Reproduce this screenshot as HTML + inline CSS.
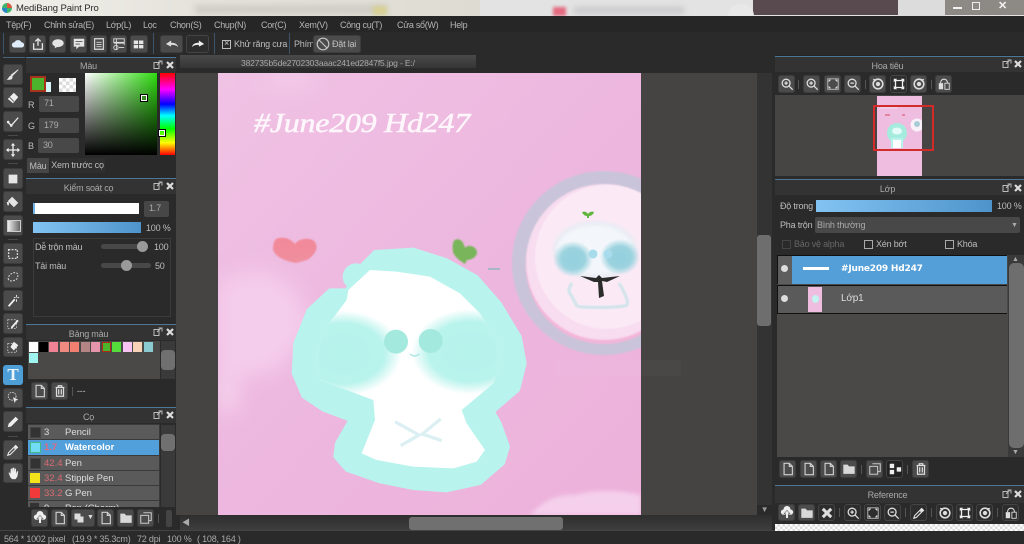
<!DOCTYPE html>
<html><head><meta charset="utf-8"><title>MediBang Paint Pro</title>
<style>
html,body{margin:0;padding:0;background:#222}
#r{position:relative;width:1024px;height:544px;overflow:hidden;background:#242424;font:9px "Liberation Sans","Noto Sans CJK JP",sans-serif;letter-spacing:-.2px;color:#bdbdbd;filter:blur(.3px)}
#r div,#r span.a,#r svg.a{position:absolute}
.t{white-space:nowrap;line-height:12px}
.b{background:#4b4b4b;border-radius:3px;box-shadow:inset 0 0 0 1px #3c3c3c}
.d{background:#2d2d2d;border-radius:3px;box-shadow:inset 0 0 0 1px #444}
.b svg,.d svg{position:absolute;left:50%;top:50%;transform:translate(-50%,-50%);width:14px;height:14px}
.ph{background:#333;height:15px;border-top:1px solid #4d7796;box-sizing:content-box}
.c{text-align:center;color:#aaa}
.m{font-size:9px;letter-spacing:-.3px;color:#b5b5b5;top:19px}
.in{background:#484848;border-radius:2px;color:#aaa;text-indent:5px;line-height:15px}
.row{left:28px;width:131px;height:14px;background:#5a5a5a;color:#ddd;font-size:9.5px;letter-spacing:0;line-height:14px}
.sw{width:9px;height:10px}
.sep{background:#555;width:1px}
</style></head><body><div id="r">
<svg width="0" height="0" style="position:absolute"><defs>
<symbol id="page" viewBox="0 0 16 16"><path d="M3.5 1.5h6l3.5 3.5v9.500h-9.500zM9.500 1.500v3.500h3.500" fill="none" stroke="#d0d0d0" stroke-width="1.300"/></symbol>
<symbol id="trash" viewBox="0 0 16 16"><path d="M3 4h10M6 4V2h4v2M4 4v10h8V4M6.500 6v6M9.500 6v6" fill="none" stroke="#ddd" stroke-width="1.400"/></symbol>
<symbol id="fold" viewBox="0 0 16 16"><path d="M1.500 3h5l1.500 2h6.500v8.500h-13z" fill="#d8d8d8"/></symbol>
<symbol id="dup" viewBox="0 0 16 16"><path d="M5 2h9v9h-3M2 5h9v9H2z" fill="none" stroke="#c8c8c8" stroke-width="1.200"/></symbol>
<symbol id="cloudup" viewBox="0 0 16 16"><path d="M4 10a3 3 0 0 1 0-6 4 4 0 0 1 8 0 3 3 0 0 1 0 6z" fill="#eee"/><path d="M8 5l3.500 4H9.500v5h-3V9H4.500z" fill="#eee" stroke="#4b4b4b" stroke-width=".6"/></symbol>
<symbol id="zin" viewBox="0 0 16 16"><circle cx="7" cy="7" r="4.500" fill="none" stroke="#ddd" stroke-width="1.500"/><path d="M10.500 10.500l4 4M5 7h4M7 5v4" stroke="#ddd" stroke-width="1.500"/></symbol>
<symbol id="zout" viewBox="0 0 16 16"><circle cx="7" cy="7" r="4.500" fill="none" stroke="#ddd" stroke-width="1.500"/><path d="M10.500 10.500l4 4M5 7h4" stroke="#ddd" stroke-width="1.500"/></symbol>
<symbol id="fit" viewBox="0 0 16 16"><path d="M2 2h12v12H2z" fill="none" stroke="#bbb"/><path d="M3 3h3L3 6zM13 3v3l-3-3zM3 13v-3l3 3zM13 13h-3l3-3z" fill="#ddd"/></symbol>
<symbol id="rot" viewBox="0 0 16 16"><circle cx="8" cy="8" r="5.500" fill="none" stroke="#ddd" stroke-width="1.800"/><circle cx="8" cy="8" r="2.500" fill="#ddd"/><path d="M2 2l5 1-3 3z" fill="#ddd"/></symbol>
<symbol id="rot2" viewBox="0 0 16 16"><circle cx="8" cy="8" r="5.500" fill="none" stroke="#ddd" stroke-width="1.800"/><circle cx="8" cy="8" r="2.500" fill="#ddd"/><path d="M14 2l-5 1 3 3z" fill="#ddd"/></symbol>
<symbol id="frame" viewBox="0 0 16 16"><path d="M4 4h8v8H4z" fill="none" stroke="#eee" stroke-width="1.500"/><path d="M2 2h4L2 6zM14 2v4l-4-4zM2 14v-4l4 4zM14 14h-4l4-4z" fill="#eee"/></symbol>
<symbol id="flip" viewBox="0 0 16 16"><path d="M2 7h5v7H2z" fill="#ddd"/><path d="M9 7h5v7H9z" fill="none" stroke="#ddd"/><path d="M4 7c0-6 8-6 8 0" fill="none" stroke="#ddd" stroke-width="1.200"/></symbol>
<symbol id="pop" viewBox="0 0 10 10"><path d="M1 2.500h5v6H1z" fill="none" stroke="#bbb"/><path d="M4 5l4-4M5.500 1H9v3.500" fill="none" stroke="#bbb"/></symbol>
<symbol id="x" viewBox="0 0 10 10"><path d="M2 2l6 6M8 2l-6 6" stroke="#ddd" stroke-width="2.200"/></symbol>
</defs></svg>

<!-- title bar -->
<div style="left:0;top:0;width:1024px;height:16px;background:#e3e3e3"></div>
<div style="left:0;top:0;width:480px;height:16px;background:linear-gradient(90deg,#f0efe9,#e5e3dc 40%,#dedcd2)"></div>
<div style="left:195px;top:5px;width:190px;height:9px;background:#cfcdc5;filter:blur(3px)"></div>
<div style="left:373px;top:6px;width:14px;height:9px;background:#d8d092;filter:blur(2px)"></div>
<div style="left:574px;top:7px;width:110px;height:7px;background:#c9c9cc;filter:blur(3px)"></div>
<div style="left:553px;top:7px;width:13px;height:9px;background:#e36a80;filter:blur(1.500px)"></div>
<div style="left:753px;top:0;width:146px;height:15px;background:#594a50"></div>
<div style="left:728px;top:4px;width:26px;height:12px;background:#e8e8e8;border-radius:12px 12px 0 0"></div>
<div style="left:898px;top:0;width:48px;height:16px;background:#dcdcdc"></div>
<div style="left:945px;top:0;width:79px;height:15px;background:#8d8985"></div>
<div style="left:953px;top:7px;width:9px;height:2px;background:#f2f2f2"></div>
<div style="left:972px;top:2px;width:6px;height:6px;border:1.500px solid #eee"></div>
<div class="t" style="left:998px;top:0;color:#f4f4f4;font-size:11px;font-weight:bold">✕</div>
<svg class="a" style="left:1px;top:2px" width="12" height="12"><circle cx="6" cy="6" r="5" fill="#3fb56a"/><path d="M6 1a5 5 0 0 1 5 5H6z" fill="#e2543e"/><path d="M1 6a5 5 0 0 0 5 5V6z" fill="#2a84c8"/></svg>
<div class="t" style="left:16px;top:3px;color:#2a2a2a;font-size:9.5px;letter-spacing:-.1px">MediBang Paint Pro</div>

<!-- menu -->
<div style="left:0;top:16px;width:1024px;height:16px;background:#262626"></div>
<div class="t m" style="left:6px">Tệp(F)</div>
<div class="t m" style="left:44px">Chỉnh sửa(E)</div>
<div class="t m" style="left:106px">Lớp(L)</div>
<div class="t m" style="left:143px">Lọc</div>
<div class="t m" style="left:170px">Chọn(S)</div>
<div class="t m" style="left:214px">Chụp(N)</div>
<div class="t m" style="left:261px">Cor(C)</div>
<div class="t m" style="left:299px">Xem(V)</div>
<div class="t m" style="left:340px">Công cụ(T)</div>
<div class="t m" style="left:397px">Cửa sổ(W)</div>
<div class="t m" style="left:450px">Help</div>

<!-- toolbar -->
<div style="left:0;top:32px;width:1024px;height:23px;background:#2a2a2a"></div>
<div style="left:3px;top:33px;width:1px;height:21px;background:#3d556a"></div>
<div style="left:153px;top:33px;width:1px;height:21px;background:#3d556a"></div>
<div style="left:214px;top:33px;width:1px;height:21px;background:#3d556a"></div>
<div style="left:289px;top:33px;width:1px;height:21px;background:#3d556a"></div>
<div class="b" style="left:9px;top:35px;width:17px;height:18px"><svg viewBox="0 0 16 16"><path d="M4 12a3 3 0 0 1 0-6 4.500 4.500 0 0 1 8 0 3 3 0 0 1 0 6z" fill="#dfeefa"/></svg></div>
<div class="b" style="left:29px;top:35px;width:17px;height:18px"><svg viewBox="0 0 16 16"><path d="M3 7v7h10V7M8 10V2M5 5l3-3 3 3" fill="none" stroke="#e5e5e5" stroke-width="1.500"/></svg></div>
<div class="b" style="left:49px;top:35px;width:17px;height:18px"><svg viewBox="0 0 16 16"><ellipse cx="8" cy="7" rx="6.500" ry="4.500" fill="#e5e5e5"/><path d="M5 10l-1 3 4-2z" fill="#e5e5e5"/></svg></div>
<div class="b" style="left:70px;top:35px;width:17px;height:18px"><svg viewBox="0 0 16 16"><path d="M2 2h12v9H8l-3 3v-3H2z" fill="#e5e5e5"/><path d="M4 5h8M4 8h5" stroke="#555"/></svg></div>
<div class="b" style="left:90px;top:35px;width:17px;height:18px"><svg viewBox="0 0 16 16"><path d="M3 2h10v12H3z" fill="none" stroke="#ddd" stroke-width="1.300"/><path d="M5 6h6M5 8.500h6M5 11h6" stroke="#ddd"/></svg></div>
<div class="b" style="left:110px;top:35px;width:17px;height:18px"><svg viewBox="0 0 16 16"><path d="M2 2h12v4H2zM2 7h12v2M5 2v12" fill="none" stroke="#ddd"/><circle cx="4.500" cy="12" r="2.500" fill="none" stroke="#ddd"/><path d="M8 12h6" stroke="#ddd"/></svg></div>
<div class="b" style="left:130px;top:35px;width:18px;height:18px"><svg viewBox="0 0 16 16"><path d="M2 4h5v4H2zM8 4h5v4H8zM2 9h5v4H2zM8 9h5v4H8z" fill="#e5e5e5"/></svg></div>
<div class="b" style="left:160px;top:35px;width:23px;height:18px"><svg viewBox="0 0 16 16"><path d="M1 8l6-4v2.500c4 0 7 1 8 5-2-2-4-2.500-8-2.500V11z" fill="#ddd"/></svg></div>
<div class="d" style="left:186px;top:35px;width:23px;height:18px"><svg viewBox="0 0 16 16"><path d="M15 8L9 4v2.500c-4 0-7 1-8 5 2-2 4-2.500 8-2.500V11z" fill="#eee"/></svg></div>
<div style="left:222px;top:40px;width:7px;height:7px;border:1px solid #bbb"></div>
<div class="t" style="left:224px;top:39px;font-size:9px;color:#ccc;line-height:9px">×</div>
<div class="t" style="left:234px;top:38px;color:#bbb">Khử răng cưa</div>
<div class="t" style="left:294px;top:38px;color:#bbb">Phím</div>
<div class="b" style="left:313px;top:35px;width:48px;height:18px"></div>
<svg class="a" style="left:316px;top:37px" width="14" height="14"><circle cx="7" cy="7" r="5.800" fill="none" stroke="#c5c5c5" stroke-width="1.200"/><path d="M3 3l8 8" stroke="#c5c5c5" stroke-width="1.200"/></svg>
<div class="t" style="left:332px;top:38px;color:#c0c0c0">Đặt lại</div>

<!-- left tools -->
<div style="left:0;top:55px;width:26px;height:475px;background:#2a2a2a"></div>
<div style="left:3px;top:57px;width:22px;height:1px;background:#48647c"></div>
<div class="b" style="left:3px;top:64px;width:20px;height:21px"><svg viewBox="0 0 16 16"><path d="M14 2L7 9l-1-1zM6 9c-2 0-2 2-4 4 3 0 5 0 5-3z" fill="#e5e5e5" stroke="#e5e5e5"/></svg></div>
<div class="b" style="left:3px;top:87px;width:20px;height:21px"><svg viewBox="0 0 16 16"><path d="M9 2l5 5-6 7-6-5z" fill="#eee"/><path d="M4 7l5 5" stroke="#444"/></svg></div>
<div class="b" style="left:3px;top:111px;width:20px;height:21px"><svg viewBox="0 0 16 16"><path d="M2 8l4 4 8-9" fill="none" stroke="#eee" stroke-width="1.500"/><circle cx="2.500" cy="8" r="1.500" fill="#eee"/><circle cx="6" cy="12" r="1.500" fill="#eee"/></svg></div>
<div style="left:8px;top:135px;width:10px;height:1px;background:#4a4a4a"></div>
<div class="b" style="left:3px;top:139px;width:20px;height:21px"><svg viewBox="0 0 16 16"><path d="M8 1v14M1 8h14" stroke="#eee" stroke-width="1.500"/><path d="M8 0l2.500 3h-5zM8 16l2.500-3h-5zM0 8l3-2.500v5zM16 8l-3-2.500v5z" fill="#eee"/></svg></div>
<div style="left:8px;top:163px;width:10px;height:1px;background:#4a4a4a"></div>
<div class="b" style="left:3px;top:168px;width:20px;height:21px"><svg viewBox="0 0 16 16"><path d="M3 3h10v10H3z" fill="#e5e5e5"/></svg></div>
<div class="b" style="left:3px;top:191px;width:20px;height:21px"><svg viewBox="0 0 16 16"><path d="M7 2l7 7-5 5-7-7z" fill="#e5e5e5"/><path d="M1 8c0 3 1 4 1.500 4S4 11 3 8z" fill="#e5e5e5"/></svg></div>
<div class="b" style="left:3px;top:215px;width:20px;height:21px"><div style="left:4px;top:5px;width:12px;height:10px;background:linear-gradient(90deg,#eee,#666);border:1px solid #ccc"></div></div>
<div style="left:8px;top:239px;width:10px;height:1px;background:#4a4a4a"></div>
<div class="b" style="left:3px;top:243px;width:20px;height:21px"><svg viewBox="0 0 16 16"><path d="M3 3h10v10H3z" fill="none" stroke="#ddd" stroke-width="1.500" stroke-dasharray="2 1.500"/></svg></div>
<div class="b" style="left:3px;top:266px;width:20px;height:22px"><svg viewBox="0 0 16 16"><path d="M3 11c-2-3 3-8 7-8s4 3 3 6-8 5-10 2z" fill="none" stroke="#ccc" stroke-width="1.300" stroke-dasharray="2 1.500"/></svg></div>
<div class="b" style="left:3px;top:290px;width:20px;height:21px"><svg viewBox="0 0 16 16"><path d="M3 14L10 6" stroke="#eee" stroke-width="2"/><path d="M12 1v3M12 6v3M9 4h2M13 4h2" stroke="#eee"/></svg></div>
<div class="b" style="left:3px;top:313px;width:20px;height:21px"><svg viewBox="0 0 16 16"><path d="M2 3h10v10H2z" fill="none" stroke="#bbb" stroke-dasharray="2 1.500"/><path d="M6 11l7-8 1.500 1.500-7 8-2 .5z" fill="#eee"/></svg></div>
<div class="b" style="left:3px;top:337px;width:20px;height:20px"><svg viewBox="0 0 16 16"><path d="M2 4h10v10H2z" fill="none" stroke="#bbb" stroke-dasharray="2 1.500"/><path d="M9 2l5 4-5 6-4-4z" fill="#eee"/></svg></div>
<div style="left:3px;top:365px;width:20px;height:20px;background:#4e9fd8;border-radius:3px;color:#eef6fb;font:bold 17px/20px 'Liberation Serif',serif;text-align:center">T</div>
<div class="b" style="left:3px;top:388px;width:20px;height:20px"><svg viewBox="0 0 16 16"><circle cx="7" cy="6" r="4.500" fill="none" stroke="#ccc" stroke-dasharray="2 1"/><path d="M8 7l6 3-3 1-1 3z" fill="#eee"/></svg></div>
<div class="b" style="left:3px;top:411px;width:20px;height:21px"><svg viewBox="0 0 16 16"><path d="M3 10l8-8 3 3-8 8-4 1z" fill="#eee"/></svg></div>
<div style="left:8px;top:436px;width:10px;height:1px;background:#4a4a4a"></div>
<div class="b" style="left:3px;top:440px;width:20px;height:20px"><svg viewBox="0 0 16 16"><path d="M2 14l1-3 6-6 2 2-6 6z" fill="none" stroke="#eee" stroke-width="1.200"/><path d="M9 4l2-2 3 3-2 2z" fill="#eee"/></svg></div>
<div class="b" style="left:3px;top:463px;width:20px;height:20px"><svg viewBox="0 0 16 16"><path d="M3 8l2 5 2 2h4l2-3 1-6-1.500 0-1 3V3h-1.500l-.5 4V2H7.500L7 7V3H5.500L5 9 3.500 7z" fill="#eee"/></svg></div>

<!-- panel: Màu -->
<div class="ph" style="left:26px;top:57px;width:150px"></div>
<div class="t c" style="left:26px;top:60px;width:125px">Màu</div>
<svg class="a" style="left:153px;top:60px" width="10" height="10"><use href="#pop"/></svg>
<svg class="a" style="left:165px;top:60px" width="10" height="10"><use href="#x"/></svg>
<div style="left:26px;top:73px;width:150px;height:105px;background:#2a2a2a"></div>
<div style="left:37px;top:82px;width:14px;height:10px;background:#d4f6f8"></div>
<div style="left:30px;top:76px;width:12px;height:12px;background:#4cb32c;border:2px solid #a8321a"></div>
<div style="left:59px;top:78px;width:17px;height:14px;background:repeating-conic-gradient(#ddd 0 25%,#fff 0 50%) 0 0/7px 7px"></div>
<div class="t" style="left:28px;top:99px">R</div><div class="in t" style="left:39px;top:96px;width:40px;height:16px">71</div>
<div class="t" style="left:28px;top:120px">G</div><div class="in t" style="left:39px;top:118px;width:40px;height:15px">179</div>
<div class="t" style="left:28px;top:140px">B</div><div class="in t" style="left:38px;top:138px;width:41px;height:15px">30</div>
<div style="left:85px;top:73px;width:72px;height:82px;background:linear-gradient(0deg,#000,transparent),linear-gradient(90deg,#fff,#2fdc10)"></div>
<div style="left:141px;top:95px;width:4px;height:4px;border:1px solid #fff;outline:1px solid #000;background:#3a8a24"></div>
<div style="left:160px;top:73px;width:15px;height:82px;background:linear-gradient(180deg,#f00,#f0f 20%,#00f 38%,#0ff 52%,#0f0 68%,#ff0 85%,#f00)"></div>
<div style="left:159px;top:130px;width:4px;height:4px;border:1px solid #fff;outline:1px solid #000"></div>
<div class="t" style="left:27px;top:158px;width:22px;height:15px;background:#464646;text-align:center;line-height:16px">Màu</div>
<div class="t" style="left:50px;top:158px;width:55px;height:15px;background:#2f2f2f;text-align:center;line-height:15px">Xem trước cọ</div>

<!-- panel: Kiểm soát cọ -->
<div class="ph" style="left:26px;top:178px;width:150px"></div>
<div class="t c" style="left:26px;top:182px;width:125px">Kiểm soát cọ</div>
<svg class="a" style="left:153px;top:181px" width="10" height="10"><use href="#pop"/></svg>
<svg class="a" style="left:165px;top:181px" width="10" height="10"><use href="#x"/></svg>
<div style="left:26px;top:194px;width:150px;height:130px;background:#2a2a2a"></div>
<div style="left:33px;top:203px;width:106px;height:11px;background:#fff;box-shadow:inset 2px 0 #6fb3e6"></div>
<div class="in t" style="left:144px;top:201px;width:25px;height:16px;background:#474747">1.7</div>
<div style="left:33px;top:222px;width:108px;height:11px;background:linear-gradient(90deg,#82c3f2,#4e94cb)"></div>
<div class="t" style="left:146px;top:222px">100 %</div>
<div style="left:33px;top:238px;width:136px;height:77px;border:1px solid #3b3b3b"></div>
<div class="t" style="left:35px;top:241px">Dễ trộn màu</div>
<div style="left:101px;top:244px;width:47px;height:5px;background:#484848;border-radius:3px"></div>
<div style="left:137px;top:241px;width:11px;height:11px;border-radius:50%;background:#9a9a9a"></div>
<div class="t" style="left:154px;top:241px">100</div>
<div class="t" style="left:35px;top:260px">Tải màu</div>
<div style="left:101px;top:263px;width:50px;height:5px;background:#484848;border-radius:3px"></div>
<div style="left:121px;top:260px;width:11px;height:11px;border-radius:50%;background:#9a9a9a"></div>
<div class="t" style="left:155px;top:260px">50</div>

<!-- panel: Bảng màu -->
<div class="ph" style="left:26px;top:324px;width:150px"></div>
<div class="t c" style="left:26px;top:328px;width:125px">Bảng màu</div>
<svg class="a" style="left:153px;top:327px" width="10" height="10"><use href="#pop"/></svg>
<svg class="a" style="left:165px;top:327px" width="10" height="10"><use href="#x"/></svg>
<div style="left:26px;top:340px;width:150px;height:67px;background:#2a2a2a"></div>
<div style="left:28px;top:341px;width:132px;height:38px;background:#4b4848"></div>
<div class="sw" style="left:29px;top:342px;background:#fff"></div>
<div class="sw" style="left:39px;top:342px;background:#000"></div>
<div class="sw" style="left:49px;top:342px;background:#f08296"></div>
<div class="sw" style="left:60px;top:342px;background:#ef8a80"></div>
<div class="sw" style="left:70px;top:342px;background:#f17f72"></div>
<div class="sw" style="left:81px;top:342px;background:#b58585"></div>
<div class="sw" style="left:91px;top:342px;background:#e596ad"></div>
<div class="sw" style="left:102px;top:342px;width:7px;height:8px;background:#4cb32c;border:1px solid #b0281a"></div>
<div class="sw" style="left:112px;top:342px;background:#55dd3c"></div>
<div class="sw" style="left:123px;top:342px;background:#f7c3f2"></div>
<div class="sw" style="left:133px;top:342px;background:#f8d2b6"></div>
<div class="sw" style="left:144px;top:342px;background:#8ccad2"></div>
<div class="sw" style="left:29px;top:353px;background:#9ff4f0"></div>
<div style="left:161px;top:341px;width:14px;height:38px;background:#3a3a3a"></div>
<div style="left:161px;top:350px;width:14px;height:20px;background:#707070;border-radius:4px"></div>
<div class="b" style="left:31px;top:382px;width:17px;height:18px"><svg><use href="#page"/></svg></div>
<div class="b" style="left:51px;top:382px;width:17px;height:18px"><svg><use href="#trash"/></svg></div>
<div class="sep" style="left:72px;top:387px;height:9px"></div>
<div class="t" style="left:77px;top:385px">---</div>

<!-- panel: Cọ -->
<div class="ph" style="left:26px;top:407px;width:150px"></div>
<div class="t c" style="left:26px;top:411px;width:125px">Cọ</div>
<svg class="a" style="left:153px;top:410px" width="10" height="10"><use href="#pop"/></svg>
<svg class="a" style="left:165px;top:410px" width="10" height="10"><use href="#x"/></svg>
<div style="left:26px;top:423px;width:150px;height:107px;background:#2a2a2a"></div>
<div style="left:28px;top:424px;width:132px;height:83px;background:#3a3a3a;overflow:hidden"></div>
<div class="row" style="top:425px"><div class="t" style="left:16px;top:2px">3</div><div class="t" style="left:37px;top:2px">Pencil</div><div style="left:2px;top:2px;width:9px;height:9px;background:#333;border:1px solid #444"></div></div>
<div class="row" style="top:440px;height:15px;background:#52a0db;color:#fff;font-weight:bold"><div class="t" style="left:16px;top:2px;color:#e06a80">1.7</div><div class="t" style="left:37px;top:2px">Watercolor</div><div style="left:2px;top:2px;width:9px;height:9px;background:#71dcf3;border:1px solid #4b8"></div></div>
<div class="row" style="top:456px"><div class="t" style="left:16px;top:2px;color:#d86a72">42.4</div><div class="t" style="left:37px;top:2px">Pen</div><div style="left:2px;top:2px;width:9px;height:9px;background:#333;border:1px solid #444"></div></div>
<div class="row" style="top:471px"><div class="t" style="left:16px;top:2px;color:#d86a72">32.4</div><div class="t" style="left:37px;top:2px">Stipple Pen</div><div style="left:2px;top:2px;width:10px;height:10px;background:#f4e21a"></div></div>
<div class="row" style="top:486px"><div class="t" style="left:16px;top:2px;color:#d86a72">33.2</div><div class="t" style="left:37px;top:2px">G Pen</div><div style="left:2px;top:2px;width:10px;height:10px;background:#f23a3a"></div></div>
<div class="row" style="top:501px;height:6px;overflow:hidden"><div class="t" style="left:16px;top:2px">9</div><div class="t" style="left:37px;top:2px">Pen (Charm)</div><div style="left:2px;top:2px;width:9px;height:9px;background:#333"></div></div>
<div style="left:161px;top:425px;width:14px;height:82px;background:#3a3a3a"></div>
<div style="left:161px;top:434px;width:14px;height:17px;background:#707070;border-radius:4px"></div>
<div class="b" style="left:31px;top:509px;width:17px;height:18px"><svg><use href="#cloudup"/></svg></div>
<div class="b" style="left:51px;top:509px;width:17px;height:18px"><svg><use href="#page"/></svg></div>
<div class="b" style="left:71px;top:509px;width:24px;height:18px"><svg style="left:8px;width:12px;height:12px" viewBox="0 0 16 16"><path d="M2 2h8v4h4v8H6v-4H2z" fill="#ddd"/></svg></div>
<div class="t" style="left:87px;top:512px;font-size:7px;color:#ddd">▼</div>
<div class="b" style="left:97px;top:509px;width:17px;height:18px"><svg><use href="#page"/></svg></div>
<div class="b" style="left:117px;top:509px;width:17px;height:18px"><svg><use href="#fold"/></svg></div>
<div class="b" style="left:137px;top:509px;width:17px;height:18px"><svg><use href="#dup"/></svg></div>
<div class="sep" style="left:158px;top:514px;height:9px"></div>
<div style="left:166px;top:510px;width:6px;height:17px;background:#444;border-radius:2px"></div>

<!-- doc area -->
<div style="left:176px;top:55px;width:599px;height:475px;background:#2a2a2a"></div>
<div style="left:180px;top:55px;width:296px;height:13px;background:linear-gradient(#4a4a4a,#353535)"></div>
<div class="t" style="left:241px;top:57px;font-size:8.5px;letter-spacing:-.15px;color:#aaa;line-height:12px">382735b5de2702303aaac241ed2847f5.jpg - E:/</div>
<div style="left:176px;top:73px;width:581px;height:442px;background:#454442"></div>
<div style="left:757px;top:73px;width:15px;height:442px;background:#333"></div>
<div style="left:757px;top:235px;width:14px;height:91px;background:#6e6e6e;border-radius:3px"></div>
<div style="left:757px;top:505px;width:15px;height:10px;background:#2a2a2a;color:#999;font-size:8px;text-align:center;line-height:10px">▼</div>
<div style="left:180px;top:515px;width:592px;height:15px;background:linear-gradient(#2f2f2f,#3e3e3e)"></div>
<div class="t" style="left:182px;top:518px;font-size:8px;color:#aaa;line-height:9px">◀</div>
<div style="left:409px;top:517px;width:154px;height:13px;background:#707070;border-radius:3px"></div>
<div style="left:641px;top:360px;width:40px;height:16px;background:#494846"></div>

<!-- canvas art -->
<svg class="a" style="left:218px;top:73px" width="423" height="442" viewBox="218 73 423 442">
<defs>
<linearGradient id="bg" x1="0" y1="0" x2="1" y2="1"><stop offset="0" stop-color="#f0c2e4"/><stop offset=".5" stop-color="#edb7df"/><stop offset="1" stop-color="#edb1da"/></linearGradient>
<linearGradient id="ht" x1="0" y1="0" x2="0" y2="1"><stop offset="0" stop-color="#f28898"/><stop offset="1" stop-color="#ef8f9f"/></linearGradient>
<radialGradient id="ch"><stop offset="0" stop-color="#b6f3eb"/><stop offset=".7" stop-color="#b8f3ec"/><stop offset="1" stop-color="#b8f3ec" stop-opacity="0"/></radialGradient>
<radialGradient id="ch2"><stop offset="0" stop-color="#93cfdd"/><stop offset=".6" stop-color="#9bd3df"/><stop offset="1" stop-color="#9bd3df" stop-opacity="0"/></radialGradient>
<clipPath id="wh"><path d="M205 150L270 90L350 95L450 110L540 160L600 220L650 300L665 370L640 430L545 510L560 550L615 630L590 665L520 685L400 680L290 660L245 640L285 540L280 480L200 450L120 420L110 360L130 270L170 220L200 180Z"/></clipPath>
<filter id="f2"><feGaussianBlur stdDeviation="2"/></filter>
<filter id="f6"><feGaussianBlur stdDeviation="10"/></filter>
<filter id="f1"><feGaussianBlur stdDeviation=".7"/></filter>
</defs>
<rect x="218" y="73" width="423" height="442" fill="url(#bg)"/>
<g filter="url(#f6)">
<ellipse cx="290" cy="80" rx="30" ry="7" fill="#f4cdeb"/>
<path d="M218 285q30-20 55-10 30 12 35 55l-30 40-60 10z" fill="#f5cdec"/>
<ellipse cx="228" cy="395" rx="10" ry="18" fill="#f6d4ee"/>
</g>
<path d="M530 515q20-22 45-20 30-8 66 0v20z" fill="#f5d0ec" filter="url(#f2)"/>
<!-- heart -->
<path d="M276 239c6-3 14-1 19 5 4-6 16-7 20-2 4 6 0 13-8 18l-11 3c-12-2-22-7-23-14 0-4 1-8 3-10z" fill="url(#ht)" filter="url(#f1)"/>
<!-- leaf -->
<path d="M455 240c4-2 8 0 10 8 3-4 11-2 12 4 0 6-7 8-10 8l-2 4c-3-2-10-6-12-12-1-6 0-11 2-12z" fill="#79b55a" filter="url(#f1)"/>
<path d="M488 269h12" stroke="#a6b7cc" stroke-width="2"/>
<!-- big circle -->
<circle cx="604" cy="263" r="92" fill="#c9c4d9" filter="url(#f1)"/>
<circle cx="604" cy="266" r="78" fill="#f3b6da" filter="url(#f1)"/>
<circle cx="604" cy="262" r="78" fill="#f8dcef" filter="url(#f1)"/>
<circle cx="607" cy="257" r="72" fill="#fbeaf6" filter="url(#f1)"/>
<path d="M572 283c-4 6-4 9-1 12l6 11c2 2 46 2 50-1 2-3-2-12-8-22" fill="none" stroke="#cfe3ea" stroke-width="3" filter="url(#f1)"/>
<ellipse cx="595" cy="250" rx="40" ry="27" fill="#f3f6fa" stroke="#d8e6ee" stroke-width="2" filter="url(#f2)"/>
<ellipse cx="573" cy="259" rx="20" ry="18" fill="url(#ch2)"/>
<ellipse cx="620" cy="257" rx="20" ry="18" fill="url(#ch2)"/>
<circle cx="593" cy="254" r="4.500" fill="#a8dcec"/><circle cx="608" cy="254" r="4.500" fill="#a8dcec"/>
<path d="M582 212c3-1 5 0 6 2 1-2 4-3 6-2-1 3-3 4-5 4v2h-2v-2c-3 0-4-2-5-4z" fill="#62b53e"/>
<path d="M580 276l16 2 3-3 3 3 18-2-13 6-5-1 2 15-5 2-1-16-4 0z" fill="#2b2b2b"/>
<!-- mascot -->
<g transform="translate(280 240) scale(.33333)">
<circle cx="228" cy="110" r="40" fill="#b8f4ed"/>
<path d="M285 35L400 28L500 60L590 110L660 190L720 290L735 370L715 450L640 515L660 550L685 620L670 670L600 730L500 752L400 745L300 725L200 690L165 650L170 610L210 540L130 510L70 470L40 400L45 310L85 210L150 150L200 150L240 80Z" fill="#b8f4ed" stroke="#b8f4ed" stroke-width="10" stroke-linejoin="round"/>
<path d="M205 150L270 90L350 95L450 110L540 160L600 220L650 300L665 370L640 430L545 510L560 550L615 630L590 665L520 685L400 680L290 660L245 640L285 540L280 480L200 450L120 420L110 360L130 270L170 220L200 180Z" fill="#fff"/>
<g clip-path="url(#wh)">
<ellipse cx="190" cy="340" rx="175" ry="128" fill="url(#ch)"/>
<ellipse cx="570" cy="335" rx="175" ry="128" fill="url(#ch)"/>
</g>
<circle cx="348" cy="305" r="36" fill="#a4e9de"/>
<circle cx="452" cy="303" r="36" fill="#a4e9de"/>
<path d="M390 342q14 12 28 0" fill="none" stroke="#a9e7e2" stroke-width="4"/>
<path d="M345 545l72 40-55 32M482 537l-55 45 58 20" fill="none" stroke="#dcf0f4" stroke-width="10"/>
</g>
<text x="254" y="132" font-family="Liberation Serif,serif" font-style="italic" font-size="27" fill="#fdf6fb" stroke="#fdf6fb" stroke-width=".5" textLength="216" lengthAdjust="spacingAndGlyphs">#June209 Hd247</text>
<rect x="555" y="360" width="86" height="16" fill="#f0bde0" opacity=".3"/>
</svg>

<!-- right: Hoa tiêu -->
<div style="left:775px;top:56px;width:249px;height:474px;background:#2a2a2a"></div>
<div class="ph" style="left:775px;top:56px;width:249px"></div>
<div class="t c" style="left:775px;top:60px;width:225px">Hoa tiêu</div>
<svg class="a" style="left:1002px;top:59px" width="10" height="10"><use href="#pop"/></svg>
<svg class="a" style="left:1013px;top:59px" width="10" height="10"><use href="#x"/></svg>
<div class="b" style="left:778px;top:75px;width:17px;height:18px"><svg><use href="#zin"/></svg></div>
<div class="sep" style="left:798px;top:80px;height:9px"></div>
<div class="b" style="left:803px;top:75px;width:17px;height:18px"><svg><use href="#zin"/></svg></div>
<div class="b" style="left:824px;top:75px;width:17px;height:18px"><svg><use href="#fit"/></svg></div>
<div class="b" style="left:844px;top:75px;width:17px;height:18px"><svg><use href="#zout"/></svg></div>
<div class="sep" style="left:865px;top:80px;height:9px"></div>
<div class="b" style="left:869px;top:75px;width:17px;height:18px"><svg><use href="#rot"/></svg></div>
<div class="d" style="left:890px;top:75px;width:17px;height:18px"><svg><use href="#frame"/></svg></div>
<div class="b" style="left:910px;top:75px;width:17px;height:18px"><svg><use href="#rot2"/></svg></div>
<div class="sep" style="left:931px;top:80px;height:9px"></div>
<div class="b" style="left:935px;top:75px;width:17px;height:18px"><svg><use href="#flip"/></svg></div>
<div style="left:775px;top:95px;width:249px;height:81px;background:#464544"></div>
<div style="left:877px;top:96px;width:45px;height:80px;background:#eebde0"></div>
<svg class="a" style="left:877px;top:96px" width="45" height="80">
<ellipse cx="20" cy="37" rx="10" ry="10" fill="#a5ecdf"/><rect x="14" y="42" width="12" height="10" fill="#b8f4ed"/><ellipse cx="20" cy="35" rx="5" ry="3.500" fill="#e5fbf7"/><rect x="16" y="44" width="8" height="8" fill="#fff"/>
<circle cx="40" cy="29" r="6.500" fill="#faf0f8"/><circle cx="40" cy="28" r="3" fill="#a8ccd6"/>
<path d="M8 19h5M25 19h3" stroke="#e4708a" stroke-width="1.500"/>
<path d="M3 12h17" stroke="#fff" stroke-width=".6"/>
</svg>
<div style="left:873px;top:105px;width:57px;height:42px;border:2px solid #d32a2a"></div>

<!-- Lớp -->
<div class="ph" style="left:775px;top:179px;width:249px"></div>
<div class="t c" style="left:775px;top:183px;width:225px">Lớp</div>
<svg class="a" style="left:1002px;top:183px" width="10" height="10"><use href="#pop"/></svg>
<svg class="a" style="left:1013px;top:183px" width="10" height="10"><use href="#x"/></svg>
<div class="t" style="left:780px;top:200px">Độ trong</div>
<div style="left:816px;top:200px;width:176px;height:12px;background:linear-gradient(90deg,#82c3f2,#4e94cb)"></div>
<div class="t" style="left:997px;top:200px">100 %</div>
<div class="t" style="left:780px;top:219px">Pha trộn</div>
<div class="in t" style="left:815px;top:217px;width:205px;height:16px;text-indent:2px;line-height:16px">Bình thường</div>
<div class="t" style="left:1011px;top:220px;font-size:7px;color:#aaa">▼</div>
<div style="left:782px;top:240px;width:7px;height:7px;border:1px solid #444"></div>
<div class="t" style="left:794px;top:238px;color:#666">Bảo vệ alpha</div>
<div style="left:864px;top:240px;width:7px;height:7px;border:1px solid #aaa"></div>
<div class="t" style="left:876px;top:238px">Xén bớt</div>
<div style="left:945px;top:240px;width:7px;height:7px;border:1px solid #aaa"></div>
<div class="t" style="left:957px;top:238px">Khóa</div>
<div style="left:777px;top:255px;width:231px;height:202px;background:#4b4948"></div>
<div style="left:777px;top:255px;width:230px;height:29px;background:#111"></div>
<div style="left:778px;top:256px;width:14px;height:28px;background:#5e5e5e"></div>
<div style="left:792px;top:256px;width:215px;height:28px;background:#549fd8"></div>
<div style="left:781px;top:265px;width:7px;height:7px;border-radius:50%;background:#ddd"></div>
<div style="left:803px;top:267px;width:26px;height:3px;background:#fff"></div>
<div class="t" style="left:841px;top:263px;color:#fff;font-weight:bold;font-family:'DejaVu Sans',sans-serif;font-size:9px">#June209 Hd247</div>
<div style="left:777px;top:285px;width:230px;height:29px;background:#111"></div>
<div style="left:778px;top:286px;width:229px;height:27px;background:#5a5a5a"></div>
<div style="left:781px;top:295px;width:7px;height:7px;border-radius:50%;background:#ddd"></div>
<div style="left:808px;top:287px;width:14px;height:25px;background:#eebde0"></div>
<div style="left:812px;top:295px;width:7px;height:8px;border-radius:50%;background:#c2f3ee"></div>
<div class="t" style="left:841px;top:293px;color:#ddd;font-size:10px">Lớp1</div>
<div style="left:1008px;top:255px;width:16px;height:202px;background:#3a3a3a"></div>
<div style="left:1009px;top:263px;width:15px;height:185px;background:#6e6e6e;border-radius:5px"></div>
<div class="t" style="left:1012px;top:256px;font-size:7px;color:#aaa;line-height:7px">▲</div>
<div class="t" style="left:1012px;top:449px;font-size:7px;color:#aaa;line-height:7px">▼</div>
<div class="b" style="left:779px;top:460px;width:17px;height:18px"><svg><use href="#page"/></svg></div>
<div class="b" style="left:800px;top:460px;width:17px;height:18px"><svg><use href="#page"/></svg></div>
<div class="b" style="left:820px;top:460px;width:17px;height:18px"><svg><use href="#page"/></svg></div>
<div class="b" style="left:840px;top:460px;width:17px;height:18px"><svg><use href="#fold"/></svg></div>
<div class="sep" style="left:861px;top:465px;height:9px"></div>
<div class="b" style="left:866px;top:460px;width:17px;height:18px"><svg><use href="#dup"/></svg></div>
<div class="d" style="left:886px;top:460px;width:17px;height:18px;background:#222"><svg viewBox="0 0 16 16"><path d="M2 2h5v5H2zM2 9h5v5H2zM10 6h5v5h-5z" fill="#eee"/></svg></div>
<div class="sep" style="left:907px;top:465px;height:9px"></div>
<div class="b" style="left:912px;top:460px;width:17px;height:18px"><svg><use href="#trash"/></svg></div>

<!-- Reference -->
<div class="ph" style="left:775px;top:485px;width:249px;height:17px"></div>
<div class="t c" style="left:775px;top:489px;width:225px">Reference</div>
<svg class="a" style="left:1002px;top:489px" width="10" height="10"><use href="#pop"/></svg>
<svg class="a" style="left:1013px;top:489px" width="10" height="10"><use href="#x"/></svg>
<div class="b" style="left:778px;top:504px;width:17px;height:17px"><svg><use href="#cloudup"/></svg></div>
<div class="b" style="left:798px;top:504px;width:17px;height:17px"><svg><use href="#fold"/></svg></div>
<div class="d" style="left:818px;top:504px;width:17px;height:17px"><svg><use href="#x"/></svg></div>
<div class="sep" style="left:839px;top:508px;height:9px"></div>
<div class="d" style="left:844px;top:504px;width:17px;height:17px"><svg><use href="#zin"/></svg></div>
<div class="d" style="left:864px;top:504px;width:17px;height:17px"><svg><use href="#fit"/></svg></div>
<div class="d" style="left:884px;top:504px;width:17px;height:17px"><svg><use href="#zout"/></svg></div>
<div class="sep" style="left:905px;top:508px;height:9px"></div>
<div class="d" style="left:910px;top:504px;width:17px;height:17px"><svg viewBox="0 0 16 16"><path d="M2 14l1-3 6-6 2 2-6 6z" fill="none" stroke="#eee" stroke-width="1.200"/><path d="M9 4l2-2 3 3-2 2z" fill="#eee"/></svg></div>
<div class="sep" style="left:931px;top:508px;height:9px"></div>
<div class="d" style="left:936px;top:504px;width:17px;height:17px"><svg><use href="#rot"/></svg></div>
<div class="d" style="left:956px;top:504px;width:17px;height:17px"><svg><use href="#frame"/></svg></div>
<div class="d" style="left:976px;top:504px;width:17px;height:17px"><svg><use href="#rot2"/></svg></div>
<div class="sep" style="left:997px;top:508px;height:9px"></div>
<div class="d" style="left:1002px;top:504px;width:17px;height:17px"><svg><use href="#flip"/></svg></div>
<div style="left:775px;top:524px;width:249px;height:7px;background:repeating-conic-gradient(#ddd 0 25%,#fff 0 50%) 0 0/5px 5px"></div>

<!-- status -->
<div style="left:0;top:531px;width:1024px;height:13px;background:#2a2a2a"></div>
<div style="left:0;top:530px;width:775px;height:1px;background:#444"></div>
<div class="t" style="left:4px;top:533px;color:#aaa">564 * 1002 pixel</div>
<div class="t" style="left:72px;top:533px;color:#aaa">(19.9 * 35.3cm)</div>
<div class="t" style="left:137px;top:533px;color:#aaa">72 dpi</div>
<div class="t" style="left:167px;top:533px;color:#aaa">100 %</div>
<div class="t" style="left:197px;top:533px;color:#aaa">( 108, 164 )</div>
</div></body></html>
